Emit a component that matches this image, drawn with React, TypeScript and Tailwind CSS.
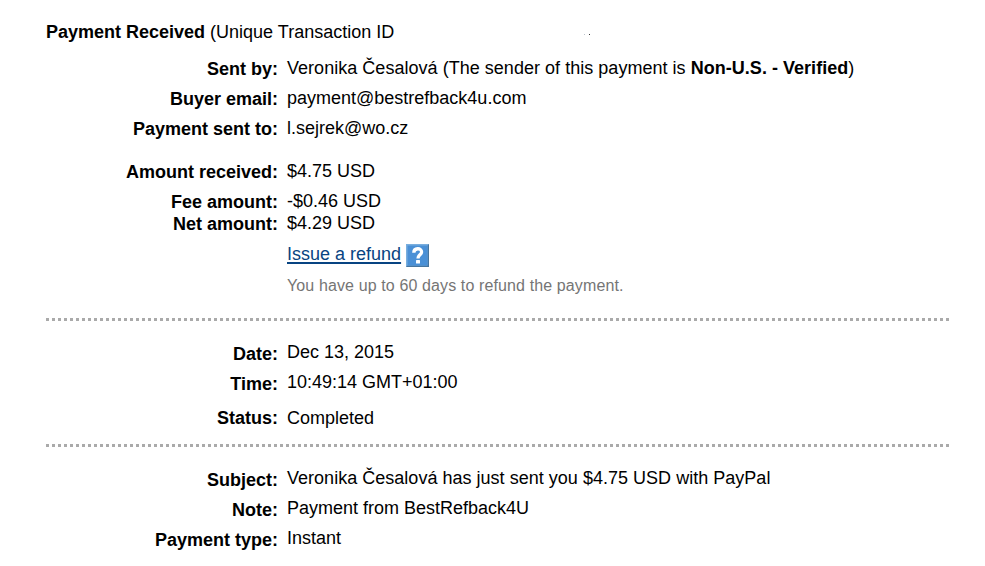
type RowProps = { label: string; gap: string; labelShift?: string; tracking?: string; children: React.ReactNode };

function Row({ label, gap, labelShift = "pt-px", tracking = "", children }: RowProps) {
  return (
    <div className={`flex h-[22px] ${gap}`}>
      <dt className={`w-[232px] shrink-0 text-right font-bold ${labelShift}`}>{label}</dt>
      <dd className={`ml-[9px] ${tracking}`}>{children}</dd>
    </div>
  );
}

function Divider({ gap }: { gap: string }) {
  return (
    <svg className={`block h-[3px] w-[903px] ${gap}`} viewBox="0 0 903 3">
      <line x1="0" y1="1.5" x2="903" y2="1.5" stroke="#aaaaaa" strokeWidth="3" strokeDasharray="3 3" />
    </svg>
  );
}

function HelpIcon() {
  return (
    <svg className="mt-px ml-[5px] h-[23px] w-[23px]" viewBox="0 0 23 23" fill="none">
      <rect width="23" height="23" fill="#46759f" />
      <path d="M0 0H23L21.5 1.5V21.5H1.5L0 23Z" fill="#79aede" />
      <rect x="1.5" y="1.5" width="20" height="20" fill="#4a90d6" />
      <path d="M7.8 8.8C7.8 3.6 15.6 3.5 15.6 8C15.6 11 12 10.8 12 14.4" stroke="#ffffff" strokeWidth="3.3" />
      <rect x="10" y="16" width="4" height="3.5" rx="0.5" fill="#ffffff" />
    </svg>
  );
}

export default function App() {
  return (
    <main className="h-[566px] w-[985px] overflow-hidden bg-white pl-[46px] pt-[21px] font-['Liberation_Sans',sans-serif] text-[18px] leading-[22px] whitespace-nowrap text-black">
      <h1 className="flex h-[22px]">
        <span><b>Payment Received</b> (Unique Transaction ID</span>
        <span className="mt-[13px] ml-[190px] h-px w-px bg-[#bcc4cc]" />
        <span className="mt-[13px] ml-[4px] h-px w-px bg-[#333333]" />
      </h1>
      <dl>
        <Row label="Sent by:" gap="mt-[14px]" tracking="tracking-[0.03px]">Veronika Česalová (The sender of this payment is <b>Non-U.S. - Verified</b>)</Row>
        <Row label="Buyer email:" gap="mt-2">payment@bestrefback4u.com</Row>
        <Row label="Payment sent to:" gap="mt-2">l.sejrek@wo.cz</Row>
        <Row label="Amount received:" gap="mt-[21px]">$4.75 USD</Row>
        <Row label="Fee amount:" gap="mt-2">-$0.46 USD</Row>
        <Row label="Net amount:" gap="mt-0">$4.29 USD</Row>
      </dl>
      <div className="ml-[241px] mt-[9px] flex h-[24px]">
        <a className="text-[#084482] underline decoration-2 underline-offset-2">Issue a refund</a>
        <HelpIcon />
      </div>
      <p className="ml-[241px] mt-[8px] h-[22px] text-[16px] tracking-[0.12px] text-[#757575]">You have up to 60 days to refund the payment.</p>
      <Divider gap="mt-[21px]" />
      <dl>
        <Row label="Date:" gap="mt-[20px]" labelShift="pt-[2px]">Dec 13, 2015</Row>
        <Row label="Time:" gap="mt-2" labelShift="pt-[2px]">10:49:14 GMT+01:00</Row>
        <Row label="Status:" gap="mt-[14px]" labelShift="pt-0">Completed</Row>
      </dl>
      <Divider gap="mt-[15px]" />
      <dl>
        <Row label="Subject:" gap="mt-[20px]" labelShift="pt-[2px]" tracking="tracking-[0.02px]">Veronika Česalová has just sent you $4.75 USD with PayPal</Row>
        <Row label="Note:" gap="mt-2" labelShift="pt-[2px]">Payment from BestRefback4U</Row>
        <Row label="Payment type:" gap="mt-2" labelShift="pt-[2px]">Instant</Row>
      </dl>
    </main>
  );
}
